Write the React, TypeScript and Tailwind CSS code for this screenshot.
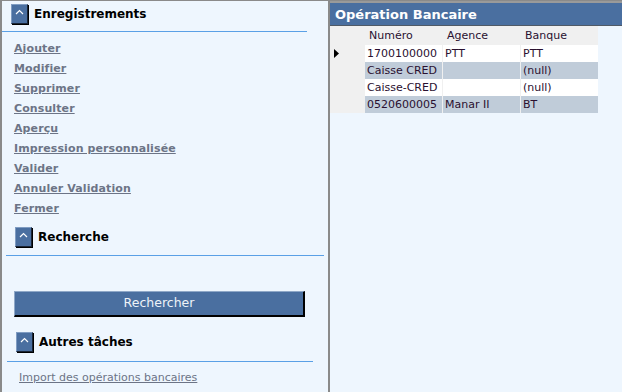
import React from "react";

const font = { fontFamily: '"DejaVu Sans", Verdana, sans-serif' };

function Chev() {
  return (
    <div className="w-[17px] h-[20px] shrink-0 bg-[#4a6fa0] border border-[#7f9cc2] border-r-[#1a2536] border-b-[#1a2536] shadow-[1px_1px_0_#000] flex justify-center pt-[4px]">
      <svg width="9" height="6" viewBox="0 0 9 6">
        <polyline points="1,5 4.5,1.5 8,5" fill="none" stroke="#ffffff" strokeWidth="1.2" />
      </svg>
    </div>
  );
}

const links = [
  "Ajouter",
  "Modifier",
  "Supprimer",
  "Consulter",
  "Aperçu",
  "Impression personnalisée",
  "Valider",
  "Annuler Validation",
  "Fermer",
];

const rows = [
  { n: "1700100000", a: "PTT", b: "PTT", alt: false, cur: true },
  { n: "Caisse CRED", a: "", b: "(null)", alt: true, cur: false },
  { n: "Caisse-CRED", a: "", b: "(null)", alt: false, cur: false },
  { n: "0520600005", a: "Manar II", b: "BT", alt: true, cur: false },
];

export default function App() {
  return (
    <div
      style={font}
      className="w-[622px] h-[392px] flex bg-[#eef6fe] border-t border-l-2 border-[#8a8a8a] overflow-hidden"
    >
      {/* Left panel */}
      <div className="w-[326px] shrink-0 flex flex-col">
        {/* Enregistrements */}
        <div className="flex items-center gap-[6px] ml-[9px] mt-[3px] h-[20px]">
          <Chev />
          <span className="text-[12px] font-bold text-black leading-none">Enregistrements</span>
        </div>
        <div className="mt-[7px] w-[305px] h-px bg-[#5aa0e6]" />
        <div className="flex flex-col mt-[6px] ml-[12px]">
          {links.map((l) => (
            <div key={l} className="h-[20px] flex items-center">
              <span className="text-[11px] font-bold text-[#6c7486] underline leading-none tracking-[0.1px]">{l}</span>
            </div>
          ))}
        </div>

        {/* Recherche */}
        <div className="flex items-center gap-[6px] ml-[13px] mt-[9px] h-[20px]">
          <Chev />
          <span className="text-[12px] font-bold text-black leading-none">Recherche</span>
        </div>
        <div className="mt-[8px] ml-[4px] w-[318px] h-px bg-[#5aa0e6]" />
        <div className="mt-[35px] ml-[12px] w-[291px] h-[26px] bg-[#4a6fa0] border border-[#8fa8c8] border-r-2 border-b-2 border-r-black border-b-black flex items-center justify-center">
          <span className="text-[12.5px] text-[#eef3f8] leading-none">Rechercher</span>
        </div>

        {/* Autres tâches */}
        <div className="flex items-center gap-[6px] ml-[14px] mt-[15px] h-[20px]">
          <Chev />
          <span className="text-[12px] font-bold text-black leading-none">Autres tâches</span>
        </div>
        <div className="mt-[9px] ml-[5px] w-[306px] h-px bg-[#5aa0e6]" />
        <div className="mt-[2px] ml-[17px]">
          <span className="text-[11px] text-[#6c7486] underline leading-none">Import des opérations bancaires</span>
        </div>
      </div>

      {/* Divider */}
      <div className="w-[2px] shrink-0 bg-[#8a8a8a]" />

      {/* Right panel */}
      <div className="flex-1 flex flex-col">
        <div className="h-[2px] bg-[#9a9a9a]" />
        <div className="h-[22px] bg-[#4a6fa0] flex items-center px-[5px]">
          <span className="text-[13px] font-bold text-white leading-none">Opération Bancaire</span>
        </div>
        <div className="h-px bg-[#505a66]" />
        <div className="w-[268px] bg-[#f0f0f0] flex flex-col text-[11px] text-[#2a1030] leading-none">
          <div className="h-[19px] grid grid-cols-[34px_77px_77px_77px] gap-x-px items-center">
            <div />
            <div className="pl-[4px]">Numéro</div>
            <div className="pl-[4px]">Agence</div>
            <div className="pl-[4px]">Banque</div>
          </div>
          {rows.map((r, i) => (
            <div key={i} className="h-[17px] grid grid-cols-[34px_77px_77px_77px] gap-x-px">
              <div className="flex items-center pl-[4px]">
                {r.cur && (
                  <svg width="5" height="9" viewBox="0 0 5 9">
                    <polygon points="0,0 5,4.5 0,9" fill="#000" />
                  </svg>
                )}
              </div>
              <div className={`flex items-center pl-[2px] ${r.alt ? "bg-[#c0ccd9]" : "bg-white"}`}>{r.n}</div>
              <div className={`flex items-center pl-[2px] ${r.alt ? "bg-[#c0ccd9]" : "bg-white"}`}>{r.a}</div>
              <div className={`flex items-center pl-[2px] ${r.alt ? "bg-[#c0ccd9]" : "bg-white"}`}>{r.b}</div>
            </div>
          ))}
        </div>
      </div>
    </div>
  );
}
